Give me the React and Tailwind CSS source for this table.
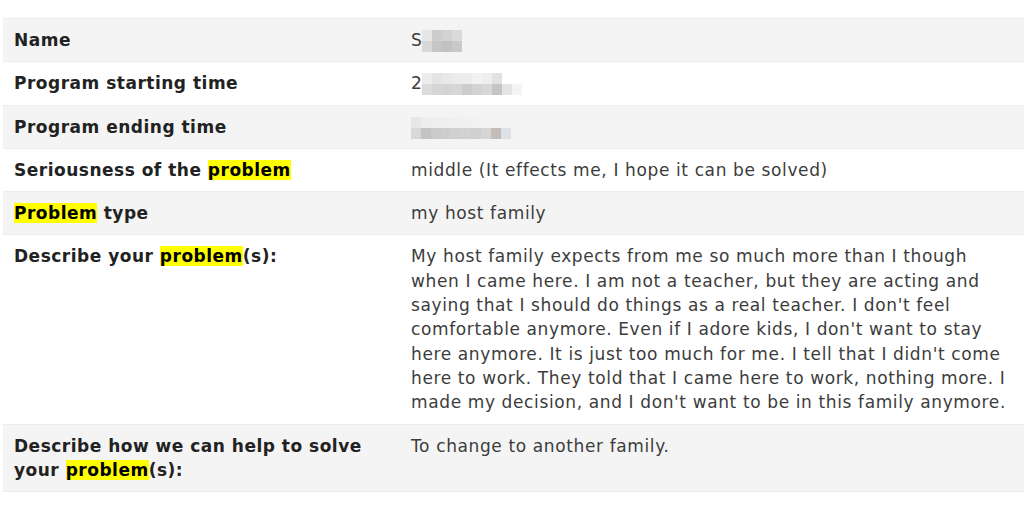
import React from "react";

const Hl = ({ children }) => <span className="bg-[#ffff00] text-black">{children}</span>;

// pixelated blur over redacted values
const Mosaic = ({ rows, size = "w-[10px] h-[11px]" }) => (
  <span className="inline-flex flex-col align-middle">
    {rows.map((row, i) => (
      <span key={i} className="flex">
        {row.map((c, j) => (
          <span key={j} className={size} style={{ background: c }} />
        ))}
      </span>
    ))}
  </span>
);

const nameBlur = [
  ["#e6e6e6", "#cdcdcd", "#d3d3d3", "#dadada"],
  ["#d8d8d8", "#c6c6c6", "#c2c2c2", "#c9c9c9"],
];
const startBlur = [
  ["#ececec", "#e4e4e4", "#e8e8e8", "#ebebeb", "#ececec", "#f2f2f2", "#eeeeee", "#e2e2e2", "#ffffff", "#ffffff", "#ffffff"],
  ["#dcdcdc", "#d6d6d6", "#d4d4d4", "#d6d6d6", "#cccccc", "#d3d3d3", "#d8d8d8", "#c4c4c4", "#e4e4e4", "#f4f4f4", "#ffffff"],
];
const endBlur = [
  ["#e7e7e7", "#ededed", "#eeeeee", "#efefef", "#f0f0f0", "#f0f0f0", "#f2f2f2", "#f3f3f3", "#f4f4f4", "#f4f4f4", "#f4f4f4", "#f4f4f4"],
  ["#d8d8d8", "#c3c3c3", "#cacaca", "#cdcdcd", "#d0d0d0", "#d2d2d2", "#cfcfcf", "#d6d6d6", "#c2bdb9", "#dde0e6", "#f4f4f4", "#f4f4f4"],
];

const rows = [
  {
    label: "Name",
    value: (
      <>
        S<Mosaic rows={nameBlur} />
      </>
    ),
    shade: true,
  },
  {
    label: "Program starting time",
    value: (
      <>
        2<Mosaic rows={startBlur} />
      </>
    ),
  },
  { label: "Program ending time", value: <Mosaic rows={endBlur} size="w-[10px] h-[11px]" />, shade: true },
  { label: <>Seriousness of the <Hl>problem</Hl></>, value: "middle (It effects me, I hope it can be solved)" },
  { label: <><Hl>Problem</Hl> type</>, value: "my host family", shade: true },
  {
    label: <>Describe your <Hl>problem</Hl>(s):</>,
    value: (
      <>
        My host family expects from me so much more than I though
        <br />
        when I came here. I am not a teacher, but they are acting and
        <br />
        saying that I should do things as a real teacher. I don't feel
        <br />
        comfortable anymore. Even if I adore kids, I don't want to stay
        <br />
        here anymore. It is just too much for me. I tell that I didn't come
        <br />
        here to work. They told that I came here to work, nothing more. I
        <br />
        made my decision, and I don't want to be in this family anymore.
      </>
    ),
  },
  { label: <>Describe how we can help to solve your <Hl>problem</Hl>(s):</>, value: "To change to another family.", shade: true },
];

const App = () => {
  return (
    <div className="min-h-[510px] bg-white pt-[18px] pl-[3px] font-['DejaVu_Sans',Verdana,sans-serif] text-[17px] leading-[24.3px]">
      <table className="w-full border-collapse border-b border-[#ececec]">
        <tbody>
          {rows.map((r, i) => (
            <tr key={i} className={`border-t border-[#ececec] ${r.shade ? "bg-[#f4f4f4]" : "bg-white"}`}>
              <td className="w-[397px] align-top px-[11px] py-[9px] font-bold text-[#222] tracking-[0.5px]">{r.label}</td>
              <td className="align-top pl-[11px] pr-[4px] py-[9px] text-[#3c3c3c] tracking-[0.62px] whitespace-nowrap">{r.value}</td>
            </tr>
          ))}
        </tbody>
      </table>
    </div>
  );
};

export default App;
